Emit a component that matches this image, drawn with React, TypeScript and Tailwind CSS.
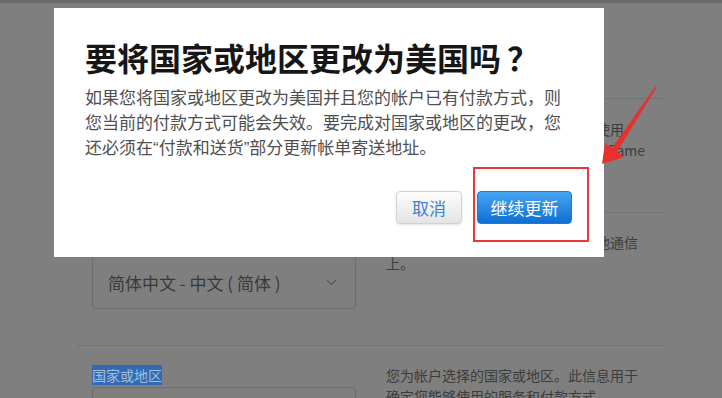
import React from 'react';

const cjk = "font-['Noto_Sans_CJK_SC','Noto_Sans',sans-serif]";

export default function App() {
  return (
    <div className={`relative h-[398px] w-[722px] overflow-hidden bg-[#7f7f7f] ${cjk}`}>
      {/* dimmed page behind the dialog */}
      <div className="h-[3px] bg-[#6a6a6a]" />
      <div className="ml-[77px] w-[588px] text-[14px] leading-[21px] text-[#3c3c3c]">
        <div className="h-[95px]" />

        <section className="flex h-[114px] border-t border-[#737373]">
          <div className="w-[309px] shrink-0" />
          <div className="pt-[20px]">
            <div className="flex w-[238px] justify-end overflow-hidden whitespace-nowrap">此电子邮件地址将用于所有服务中使用</div>
            <div className="flex w-[259px] justify-end overflow-hidden whitespace-nowrap">您可以使用它来登录 iCloud、iTunes 和 Game</div>
          </div>
        </section>

        <section className="flex h-[133px] border-t border-[#737373]">
          <div className="w-[309px] shrink-0 pl-[15px] pt-[19px]">
            <div className="h-[21px]">首选语言</div>
            <div className="mt-[2px] flex h-[54px] w-[264px] items-center justify-between rounded-[4px] border border-[#6d6d6d] pl-[15px] pr-[18px]">
              <span className="text-[17px] text-[#393939]">简体中文 - 中文 ( 简体 )</span>
              <svg width="11" height="7" viewBox="0 0 11 7" fill="none">
                <polyline points="1,1 5.5,5.5 10,1" stroke="#585858" strokeWidth="1.2" />
              </svg>
            </div>
          </div>
          <div className="pt-[19px]">
            <div className="flex w-[252px] justify-end overflow-hidden whitespace-nowrap">您的首选语言将用于电子邮件和其他通信</div>
            <div className="whitespace-nowrap">上。</div>
          </div>
        </section>

        <section className="flex border-t border-[#737373]">
          <div className="w-[309px] shrink-0 pl-[15px] pt-[19px]">
            <div className="h-[21px]">
              <span className="inline-block h-[20px] bg-[#2f6cb6] leading-[20px] text-[#a7bcd9]">国家或地区</span>
            </div>
            <div className="mt-[1px] h-[50px] w-[264px] rounded-[4px] border border-[#6d6d6d]" />
          </div>
          <div className="pt-[19px] whitespace-nowrap">
            <div>您为帐户选择的国家或地区。此信息用于</div>
            <div>确定您能够使用的服务和付款方式。</div>
          </div>
        </section>
      </div>

      {/* dialog */}
      <div className="absolute left-[54px] top-[8px] h-[249px] w-[550px] bg-white px-[31px] pt-[30px]">
        <h1 className="text-[32px] font-bold leading-[38px] text-[#161616]">
          要将国家或地区更改为美国吗<span className="ml-[6px]">？</span>
        </h1>
        <p className="mt-[10px] w-[480px] font-['Liberation_Sans','Noto_Sans_CJK_SC',sans-serif] text-[17px] leading-[25px] text-[#4f4f4f]">
          如果您将国家或地区更改为美国并且您的帐户已有付款方式，则您当前的付款方式可能会失效。要完成对国家或地区的更改，您还必须在“付款和送货”部分更新帐单寄送地址。
        </p>
        <div className="mt-[30px] flex justify-end gap-[15px] pr-[1px]">
          <button className="flex h-[33px] w-[66px] items-center justify-center rounded-[4px] border border-[#d2d2d2] bg-gradient-to-b from-[#fdfdfd] to-[#e4e4e4] text-[17px] text-[#3d7fd1] shadow-sm">
            取消
          </button>
          <button className="flex h-[33px] w-[95px] items-center justify-center rounded-[4px] border border-[#1a7ad6] bg-gradient-to-b from-[#45a5f1] to-[#0b6fd3] text-[17px] text-white">
            继续更新
          </button>
        </div>
      </div>

      {/* red annotation */}
      <div className="absolute left-[473px] top-[167px] h-[75px] w-[116px] border-2 border-[#e8383a]" />
      <svg className="pointer-events-none absolute left-0 top-0" width="722" height="398" viewBox="0 0 722 398">
        <polygon points="602,164 605,143 612,148 655.4,86.6 656.6,87.4 617,152 624,157" fill="#e8312f" />
      </svg>
    </div>
  );
}
